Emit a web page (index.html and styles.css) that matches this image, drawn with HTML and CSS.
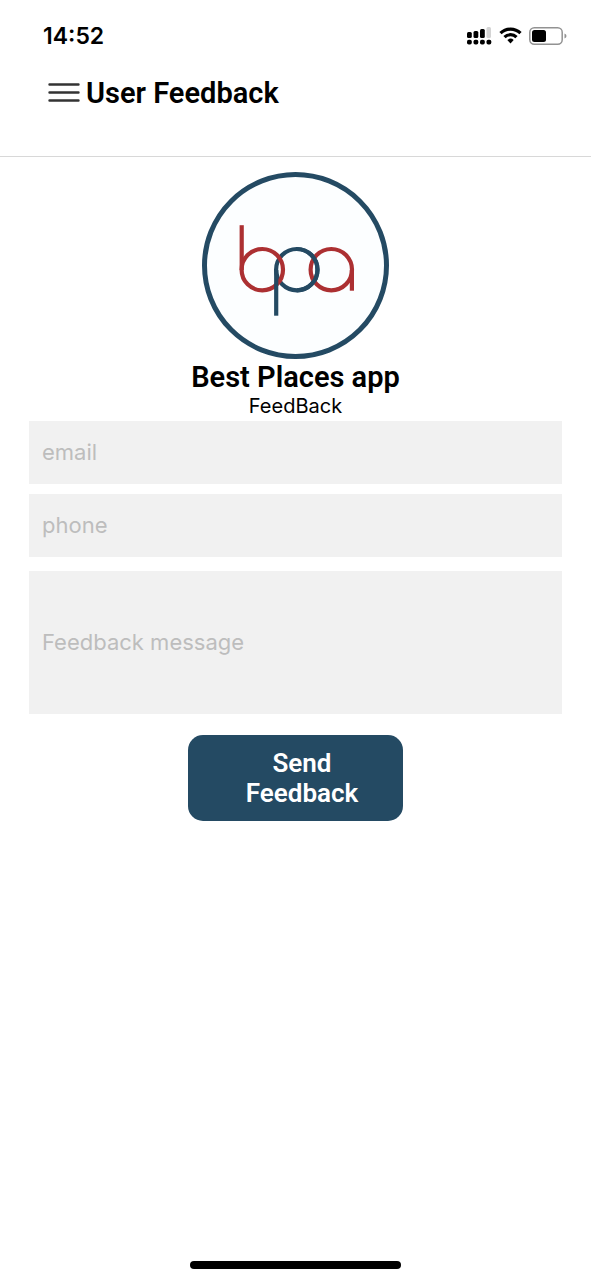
FILE: index.html
```html
<!DOCTYPE html>
<html lang="en">
<head>
<meta charset="utf-8">
<meta name="viewport" content="width=device-width, initial-scale=1">
<title>User Feedback</title>
<link rel="stylesheet" href="styles.css">
</head>
<body>
<div class="screen">
  <div class="status-bar">
    <span class="clock">14:52</span>
    <svg class="status-icons" width="102" height="22" viewBox="0 0 102 22" aria-hidden="true">
      <g fill="#000">
        <rect x="2" y="7" width="4.8" height="6" rx="1.5"/>
        <rect x="8.5" y="6" width="4.8" height="7" rx="1.5"/>
        <rect x="15" y="4" width="4.8" height="9" rx="1.5"/>
        <rect x="2" y="14.700" width="4.800" height="4.800" rx="1.800"/>
        <rect x="8.500" y="14.700" width="4.800" height="4.800" rx="1.800"/>
        <rect x="15" y="14.700" width="4.800" height="4.800" rx="1.800"/>
        <rect x="21.500" y="14.700" width="4.800" height="4.800" rx="1.800"/>
      </g>
      <rect x="21.5" y="2" width="4.5" height="11" rx="1.5" fill="#d4d4d4"/>
      <g fill="none" stroke="#000" stroke-width="3.200">
        <path d="M35.500 8.200a14.200 14.200 0 0 1 20 0"/>
        <path d="M39.500 12.200a8.500 8.500 0 0 1 12 0"/>
      </g>
      <path d="M42.300 15.100a4.700 4.700 0 0 1 6.400 0L45.500 18.500Z" fill="#000"/>
      <rect x="64.800" y="2.800" width="32.400" height="16.400" rx="4.500" fill="none" stroke="#929292" stroke-width="1.500"/>
      <rect x="67" y="5" width="14" height="12" rx="2.500" fill="#000"/>
      <path d="M99.500 8.500q2 .8 2 2.500t-2 2.500Z" fill="#929292"/>
    </svg>
  </div>
  <header class="header">
    <button class="menu" type="button" aria-label="Open menu">
      <svg width="32" height="22" viewBox="0 0 32 22" stroke="#333" stroke-width="2.400" stroke-linecap="round" aria-hidden="true">
        <path d="M1.500 2.500H30.500M1.500 10.500H30.500M1.500 18.500H30.500"/>
      </svg>
    </button>
    <h1 class="title">User Feedback</h1>
  </header>
  <main class="content">
    <svg class="logo" width="188" height="188" viewBox="0 0 188 188" fill="none" role="img" aria-label="bpa">
      <circle cx="93.500" cy="93.500" r="91" fill="#fcfeff" stroke="#244a63" stroke-width="5"/>
      <g stroke-width="4.200">
        <circle cx="94.800" cy="97.700" r="20.700" stroke="#244a63"/>
        <circle cx="60.300" cy="97.700" r="20.700" stroke="#ac3032"/>
        <path d="M39.700 53.200V98" stroke="#ac3032"/>
        <path d="M74.200 98V143.700" stroke="#244a63"/>
        <circle cx="129.300" cy="97.700" r="20.700" stroke="#ac3032"/>
        <path d="M149.900 98V118.700" stroke="#ac3032"/>
        <path d="M94.800 77a20.700 20.700 0 0 1 0 41.400" stroke="#244a63"/>
      </g>
    </svg>
    <h2 class="name">Best Places app</h2>
    <p class="subtitle">FeedBack</p>
    <form class="form">
      <input class="field" type="email" placeholder="email" aria-label="email">
      <input class="field" type="tel" placeholder="phone" aria-label="phone">
      <input class="field field-message" type="text" placeholder="Feedback message" aria-label="Feedback message">
      <button class="send" type="submit">Send Feedback</button>
    </form>
  </main>
  <div class="home-indicator"></div>
</div>
</body>
</html>
```
FILE: styles.css
```css
* {
  box-sizing: border-box;
}

body {
  margin: 0;
  background: #fff;
  color: #000;
  font-family: Roboto, "Liberation Sans", sans-serif;
}

.screen {
  display: flex;
  flex-direction: column;
  min-height: 100vh;
}

.status-bar {
  display: flex;
  align-items: center;
  justify-content: space-between;
  height: 72px;
  padding: 0 24px 0 43px;
}

.clock {
  font: 600 23px/28px Inter, sans-serif;
}

.status-icons {
  display: block;
}

.header {
  display: flex;
  align-items: flex-start;
  gap: 6px;
  height: 85px;
  padding: 4px 48px 0;
  border-bottom: 1px solid #d8d8d8;
}

.menu {
  display: flex;
  align-items: center;
  height: 34px;
  padding: 0;
  border: 0;
  background: none;
}

.title,
.name {
  margin: 0;
  font-size: 29px;
  line-height: 34px;
  font-weight: 600;
}

.content {
  display: flex;
  flex: 1;
  flex-direction: column;
  align-items: center;
  padding: 15px 29px 0;
}

.logo {
  display: block;
}

.subtitle {
  margin: 0;
  padding-bottom: 2px;
  font: 400 20px/25px Inter, sans-serif;
}

.form {
  display: flex;
  flex-direction: column;
  align-items: center;
  align-self: stretch;
}

.field {
  width: 100%;
  height: 63px;
  margin: 0 0 10px;
  padding: 0 13px 2px;
  border: 0;
  border-radius: 0;
  background: #f1f1f1;
  color: #000;
  font: 400 22px/28px Inter, sans-serif;
}

.field::placeholder {
  color: #bdbdbd;
  opacity: 1;
}

.field-message {
  height: 143px;
  margin: 4px 0 21px;
}

.send {
  width: 215px;
  padding: 13px 44px 13px 57px;
  border: 0;
  border-radius: 15px;
  background: #244a63;
  color: #fff;
  font: 600 26px/30px Roboto, sans-serif;
}

.home-indicator {
  align-self: center;
  width: 211px;
  height: 8px;
  margin-bottom: 11px;
  border-radius: 4px;
  background: #000;
}
```
